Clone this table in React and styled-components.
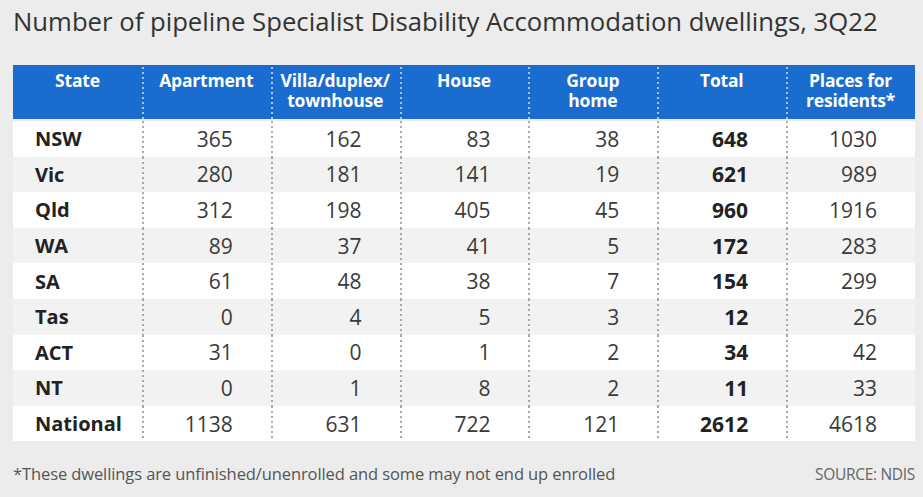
import React from "react";
import styled, { createGlobalStyle } from "styled-components";

const rows = [
  ["NSW", 365, 162, 83, 38, 648, 1030],
  ["Vic", 280, 181, 141, 19, 621, 989],
  ["Qld", 312, 198, 405, 45, 960, 1916],
  ["WA", 89, 37, 41, 5, 172, 283],
  ["SA", 61, 48, 38, 7, 154, 299],
  ["Tas", 0, 4, 5, 3, 12, 26],
  ["ACT", 31, 0, 1, 2, 34, 42],
  ["NT", 0, 1, 8, 2, 11, 33],
  ["National", 1138, 631, 722, 121, 2612, 4618],
];

const headers = [
  ["State"],
  ["Apartment"],
  ["Villa/duplex/", "townhouse"],
  ["House"],
  ["Group", "home"],
  ["Total"],
  ["Places for", "residents*"],
];

function App() {
  return (
    <Page>
      <GlobalStyle />
      <Title>Number of pipeline Specialist Disability Accommodation dwellings, 3Q22</Title>
      <Table>
        <HeadRow>
          {headers.map((lines, i) => (
            <HeadCell key={i} first={i === 0}>
              {lines[0]}
              {lines[1] && (
                <>
                  <br />
                  {lines[1]}
                </>
              )}
            </HeadCell>
          ))}
        </HeadRow>
        {rows.map((row, r) => (
          <Row key={row[0]} shaded={r % 2 === 1}>
            {row.map((val, c) =>
              c === 0 ? (
                <StateCell key={c}>{val}</StateCell>
              ) : (
                <NumCell key={c} bold={c === 5}>
                  {val}
                </NumCell>
              )
            )}
          </Row>
        ))}
      </Table>
      <Footer>
        <Note>*These dwellings are unfinished/unenrolled and some may not end up enrolled</Note>
        <Source>SOURCE: NDIS</Source>
      </Footer>
    </Page>
  );
}

export default App;

const GlobalStyle = createGlobalStyle`
  body {
    margin: 0;
    background: #ececec;
    font-family: "Open Sans", "Noto Sans", sans-serif;
  }
`;

const Page = styled.div`
  width: 923px;
  height: 497px;
  padding: 0 8px 0 13px;
  box-sizing: border-box;
  display: flex;
  flex-direction: column;
`;

const Title = styled.h1`
  margin: 4px 0 0;
  height: 61px;
  font-size: 25.7px;
  font-weight: 400;
  line-height: 36px;
  color: #333;
  letter-spacing: 0;
`;

const Table = styled.div`
  display: flex;
  flex-direction: column;
  width: 902px;
`;

const HeadRow = styled.div`
  display: grid;
  grid-template-columns: repeat(7, 1fr);
  height: 54px;
  background: #1a6dcf;
  margin-bottom: 2px;
`;

const HeadCell = styled.div`
  position: relative;
  padding-top: 5px;
  text-align: center;
  color: #fff;
  font-weight: 700;
  font-size: 17.5px;
  line-height: 20px;
  letter-spacing: -0.2px;
  &::before {
    content: "";
    display: ${({ first }) => (first ? "none" : "block")};
    position: absolute;
    left: 0;
    top: 2px;
    bottom: 0;
    width: 2px;
    background: linear-gradient(rgba(255, 255, 255, 0.6) 40%, transparent 40%);
    background-size: 2px 5px;
  }
`;

const Row = styled.div`
  display: grid;
  grid-template-columns: repeat(7, 1fr);
  height: 35.6px;
  background: ${({ shaded }) => (shaded ? "#f2f2f2" : "#ffffff")};
  color: #333;
  font-size: 21px;
`;

const StateCell = styled.div`
  display: flex;
  align-items: center;
  padding-left: 22px;
  font-size: 20px;
  font-weight: 700;
  color: #222;
`;

const NumCell = styled.div`
  position: relative;
  display: flex;
  align-items: center;
  justify-content: flex-end;
  padding-right: 38px;
  font-weight: ${({ bold }) => (bold ? 700 : 400)};
  color: ${({ bold }) => (bold ? "#222" : "#3a3a3a")};
  &::before {
    content: "";
    position: absolute;
    left: 0;
    top: 0;
    bottom: 0;
    width: 2px;
    background: linear-gradient(#a8a8a8 40%, transparent 40%);
    background-size: 2px 5px;
  }
`;

const Footer = styled.div`
  display: flex;
  justify-content: space-between;
  align-items: baseline;
  width: 902px;
  margin-top: 21px;
`;

const Note = styled.span`
  font-size: 16.5px;
  color: #555;
  letter-spacing: -0.1px;
`;

const Source = styled.span`
  font-size: 15.5px;
  color: #666;
  letter-spacing: -0.3px;
`;
